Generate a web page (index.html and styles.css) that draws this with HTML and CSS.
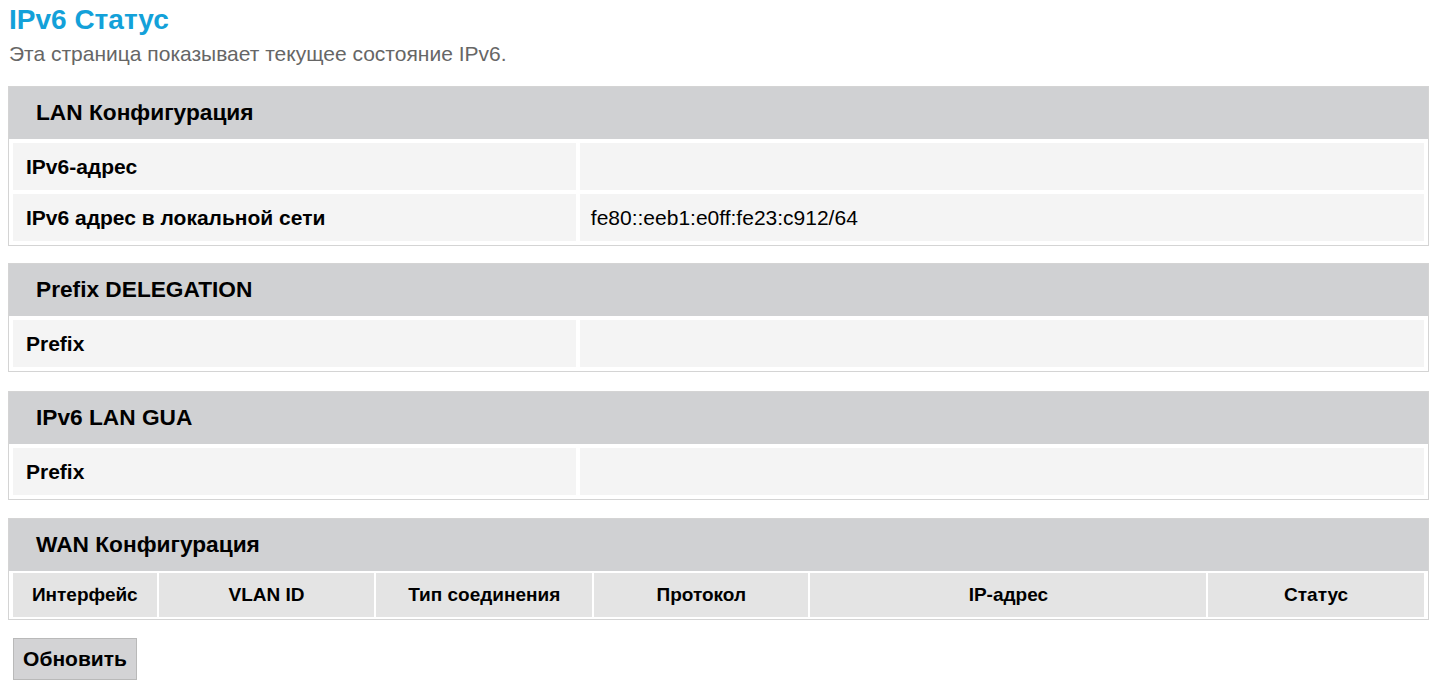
FILE: index.html
```html
<!DOCTYPE html>
<html lang="ru">
<head>
<meta charset="utf-8">
<title>IPv6 Статус</title>
<link rel="stylesheet" href="styles.css">
</head>
<body>
<h1 class="title">IPv6 Статус</h1>
<p class="intro">Эта страница показывает текущее состояние IPv6.</p>

<div class="section">
  <div class="section-head">LAN Конфигурация</div>
  <table class="kv">
    <tr><td class="label">IPv6-адрес</td><td class="value"></td></tr>
    <tr><td class="label">IPv6 адрес в локальной сети</td><td class="value">fe80::eeb1:e0ff:fe23:c912/64</td></tr>
  </table>
</div>

<div class="section section-tight">
  <div class="section-head">Prefix DELEGATION</div>
  <table class="kv">
    <tr><td class="label">Prefix</td><td class="value"></td></tr>
  </table>
</div>

<div class="section section-loose">
  <div class="section-head">IPv6 LAN GUA</div>
  <table class="kv">
    <tr><td class="label">Prefix</td><td class="value"></td></tr>
  </table>
</div>

<div class="section">
  <div class="section-head">WAN Конфигурация</div>
  <table class="grid">
    <tr>
      <th class="c-if">Интерфейс</th>
      <th class="c-vlan">VLAN ID</th>
      <th class="c-type">Тип соединения</th>
      <th class="c-proto">Протокол</th>
      <th class="c-ip">IP-адрес</th>
      <th class="c-status">Статус</th>
    </tr>
  </table>
</div>

<button class="btn" type="button">Обновить</button>
</body>
</html>
```

FILE: styles.css
```css
html, body {
  margin: 0;
  padding: 0;
  background: #ffffff;
}
body {
  margin: 0 1px 0 8px;
  font-family: "Liberation Sans", Arial, sans-serif;
  color: #000;
}
.title {
  margin: 0;
  padding: 3px 0 0 1px;
  font-size: 28px;
  line-height: 34px;
  font-weight: bold;
  color: #13a1d9;
}
.intro {
  margin: 5px 0 0 1px;
  font-size: 21px;
  line-height: 24px;
  color: #666666;
}
.section {
  border: 1px solid #d4d4d4;
  margin-top: 18px;
}
.intro + .section {
  margin-top: 20px;
}
.section.section-tight {
  margin-top: 17px;
}
.section.section-loose {
  margin-top: 19px;
}
.section-head {
  background: #d0d1d3;
  height: 52px;
  line-height: 51px;
  padding-left: 27px;
  font-size: 22.7px;
  font-weight: bold;
}
.kv, .grid {
  border-collapse: separate;
  table-layout: fixed;
}
.kv {
  width: 100%;
  border-spacing: 4px;
}
.kv td {
  box-sizing: border-box;
  height: 47px;
  padding: 0 11px;
  background: #f4f4f4;
  font-size: 21px;
}
.kv .label {
  width: 40%;
  font-weight: bold;
  padding-left: 13px;
}
.grid {
  width: calc(100% - 4px);
  margin: 0 2px;
  border-spacing: 2px;
}
.grid th {
  box-sizing: border-box;
  height: 44px;
  padding: 0;
  background: #e4e4e4;
  font-size: 19px;
  font-weight: bold;
  text-align: center;
}
.c-if { width: 10.25%; }
.c-vlan { width: 15.4%; }
.c-type { width: 15.4%; }
.c-proto { width: 15.3%; }
.c-ip { width: 28.25%; }
.c-status { width: 15.4%; }
.btn {
  display: block;
  margin: 18px 0 0 5px;
  width: 124px;
  height: 42px;
  background: #d3d3d5;
  border: 1px solid #b9b9b9;
  border-radius: 0;
  font-family: "Liberation Sans", Arial, sans-serif;
  font-size: 21px;
  font-weight: bold;
  color: #000;
  padding: 0;
}
```
